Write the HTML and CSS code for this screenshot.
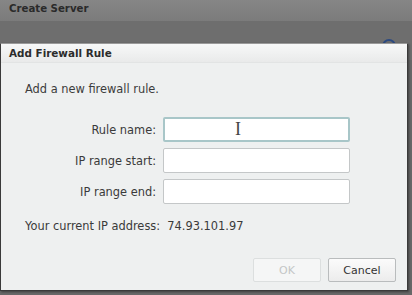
FILE: index.html
```html
<!DOCTYPE html>
<html lang="en">
<head>
    <meta charset="UTF-8">
    <title>Create Server - Add Firewall Rule</title>
    <link rel="stylesheet" href="styles.css">
</head>
<body>
  <div class="page">
    <div class="page-title">Create Server</div>
    <div class="page-row">
        <span class="help-dot"></span>
    </div>
  </div>

  <div class="dialog">
    <div class="dialog-title">Add Firewall Rule</div>
    <div class="dialog-body">
        <p class="intro">Add a new firewall rule.</p>
        <div class="form">
            <label for="rule">Rule name:</label>
            <div class="field">
                <input type="text" id="rule" class="focused">
                <span class="caret">I</span>
            </div>
            <label for="start">IP range start:</label>
            <input type="text" id="start">
            <label for="end">IP range end:</label>
            <input type="text" id="end">
        </div>
        <p class="ip">Your current IP address:&nbsp;&nbsp;74.93.101.97</p>
        <div class="buttons">
            <button class="btn" disabled>OK</button>
            <button class="btn">Cancel</button>
        </div>
    </div>
  </div>
</body>
</html>
```

FILE: styles.css
```css
body {
    margin: 0;
    background-color: #686868;
    font-family: "DejaVu Sans", Verdana, sans-serif;
    font-size: 11.4px;
    color: #333;
    width: 412px;
    height: 295px;
    overflow: hidden;
    position: relative;
}

.page {
    height: 60px;
    overflow: hidden;
}

.page-title {
    height: 21px;
    padding-left: 9px;
    line-height: 17px;
    font-weight: bold;
    font-size: 10.2px;
    color: #2a2a2a;
    background: linear-gradient(#868686, #7b7b7b);
}

.page-row {
    display: flex;
    justify-content: flex-end;
    align-items: flex-start;
    padding: 18px 16px 0 22px;
    background-color: #6e6e6e;
    height: 40px;
}

.help-dot {
    width: 10px;
    height: 10px;
    border: 2px solid #2c4a80;
    border-radius: 50%;
}

.dialog {
    position: absolute;
    left: 0;
    top: 43px;
    width: 406px;
    height: 246px;
    border: 1px solid #3a3a3a;
    border-top-color: #9a9a9a;
    background-color: #eef0f0;
    display: flex;
    flex-direction: column;
    box-shadow: 1px 1px 2px rgba(0, 0, 0, 0.4);
}

.dialog-title {
    height: 18px;
    line-height: 19px;
    padding-left: 8px;
    font-weight: bold;
    font-size: 10.4px;
    color: #2c2c2c;
    background: linear-gradient(#f7f8f8, #e9eaea);
    border-bottom: 1px solid #e2e4e4;
}

.dialog-body {
    flex: 1;
    display: flex;
    flex-direction: column;
    padding: 0 11px 8px 24px;
}

.intro {
    margin: 19px 0 0;
    color: #3c3c3c;
}

.form {
    display: grid;
    grid-template-columns: 131px 187px;
    column-gap: 7px;
    row-gap: 6px;
    align-items: center;
    margin-top: 21px;
}

.form label {
    text-align: right;
    color: #3a3a3a;
}

.field {
    position: relative;
}

.form input {
    box-sizing: border-box;
    width: 187px;
    height: 25px;
    margin: 0;
    border: 1px solid #c4c7c8;
    border-radius: 2px;
    background-color: #fff;
}

.form input.focused {
    border: 2px solid #a8c6c8;
}

.caret {
    position: absolute;
    left: 72px;
    top: 2px;
    font-family: "Liberation Serif", serif;
    font-size: 18px;
    color: #444;
}

.ip {
    margin: 15px 0 0;
    color: #3a3a3a;
}

.buttons {
    margin-top: auto;
    display: flex;
    justify-content: flex-end;
    gap: 7px;
}

.btn {
    width: 68px;
    height: 24px;
    font-family: "DejaVu Sans", Verdana, sans-serif;
    font-size: 11px;
    color: #333;
    background: linear-gradient(#fbfbfb, #ececec);
    border: 1px solid #b9bcbd;
    border-radius: 2px;
}

.btn:disabled {
    color: #c4c6c6;
    background: #f5f6f6;
    border-color: #dcdfdf;
}
```
